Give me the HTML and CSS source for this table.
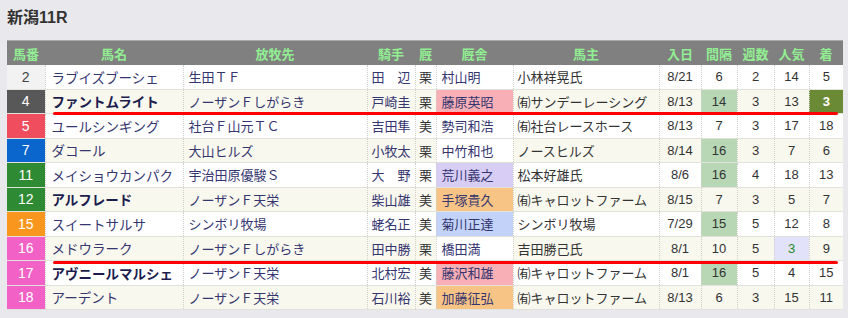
FILE: index.html
```html
<!DOCTYPE html>
<html lang="ja">
<head>
<meta charset="utf-8">
<link rel="stylesheet" href="styles.css">
</head>
<body>
<h1 class="title">新潟11R</h1>
<div class="board">
<table class="race">
<colgroup>
<col class="c-no"><col class="c-name"><col class="c-farm"><col class="c-jockey"><col class="c-area"><col class="c-stable"><col class="c-owner"><col class="c-date"><col class="c-int"><col class="c-week"><col class="c-pop"><col class="c-rank">
</colgroup>
<thead>
<tr><th>馬番</th><th>馬名</th><th>放牧先</th><th>騎手</th><th>厩</th><th>厩舎</th><th>馬主</th><th>入日</th><th>間隔</th><th>週数</th><th>人気</th><th>着</th></tr>
</thead>
<tbody>
<tr><td class="no f1">2</td><td class="name">ラブイズブーシェ</td><td class="farm">生田ＴＦ</td><td class="jockey">田　辺</td><td class="area">栗</td><td class="stable">村山明</td><td class="owner">小林祥晃氏</td><td class="num">8/21</td><td class="num">6</td><td class="num">2</td><td class="num">14</td><td class="num">5</td></tr>
<tr><td class="no f2">4</td><td class="name strong">ファントムライト</td><td class="farm">ノーザンＦしがらき</td><td class="jockey">戸崎圭</td><td class="area">栗</td><td class="stable s-pink">藤原英昭</td><td class="owner">㈲サンデーレーシング</td><td class="num">8/13</td><td class="num g">14</td><td class="num">3</td><td class="num">13</td><td class="num win">3</td></tr>
<tr><td class="no f3">5</td><td class="name">ユールシンギング</td><td class="farm">社台Ｆ山元ＴＣ</td><td class="jockey">吉田隼</td><td class="area">美</td><td class="stable">勢司和浩</td><td class="owner">㈲社台レースホース</td><td class="num">8/13</td><td class="num">7</td><td class="num">3</td><td class="num">17</td><td class="num">18</td></tr>
<tr><td class="no f4">7</td><td class="name">ダコール</td><td class="farm">大山ヒルズ</td><td class="jockey">小牧太</td><td class="area">栗</td><td class="stable s-white">中竹和也</td><td class="owner">ノースヒルズ</td><td class="num">8/14</td><td class="num g">16</td><td class="num">3</td><td class="num">7</td><td class="num">6</td></tr>
<tr><td class="no f6">11</td><td class="name">メイショウカンパク</td><td class="farm">宇治田原優駿Ｓ</td><td class="jockey">大　野</td><td class="area">栗</td><td class="stable s-lav">荒川義之</td><td class="owner">松本好雄氏</td><td class="num">8/6</td><td class="num g">16</td><td class="num">4</td><td class="num">18</td><td class="num">13</td></tr>
<tr><td class="no f6">12</td><td class="name strong">アルフレード</td><td class="farm">ノーザンＦ天栄</td><td class="jockey">柴山雄</td><td class="area">美</td><td class="stable s-orange">手塚貴久</td><td class="owner">㈲キャロットファーム</td><td class="num">8/15</td><td class="num">7</td><td class="num">3</td><td class="num">5</td><td class="num">7</td></tr>
<tr><td class="no f7">15</td><td class="name">スイートサルサ</td><td class="farm">シンボリ牧場</td><td class="jockey">蛯名正</td><td class="area">美</td><td class="stable s-blue">菊川正達</td><td class="owner">シンボリ牧場</td><td class="num">7/29</td><td class="num g">15</td><td class="num">5</td><td class="num">12</td><td class="num">8</td></tr>
<tr><td class="no f8">16</td><td class="name">メドウラーク</td><td class="farm">ノーザンＦしがらき</td><td class="jockey">田中勝</td><td class="area">栗</td><td class="stable s-white">橋田満</td><td class="owner">吉田勝己氏</td><td class="num">8/1</td><td class="num">10</td><td class="num">5</td><td class="num pop">3</td><td class="num">9</td></tr>
<tr><td class="no f8">17</td><td class="name strong">アヴニールマルシェ</td><td class="farm">ノーザンＦ天栄</td><td class="jockey">北村宏</td><td class="area">美</td><td class="stable s-pink">藤沢和雄</td><td class="owner">㈲キャロットファーム</td><td class="num">8/1</td><td class="num g">16</td><td class="num">5</td><td class="num">4</td><td class="num">15</td></tr>
<tr><td class="no f8">18</td><td class="name">アーデント</td><td class="farm">ノーザンＦ天栄</td><td class="jockey">石川裕</td><td class="area">美</td><td class="stable s-orange">加藤征弘</td><td class="owner">㈲キャロットファーム</td><td class="num">8/13</td><td class="num">6</td><td class="num">3</td><td class="num">15</td><td class="num">11</td></tr>
</tbody>
</table>
<div class="mark mark-a"></div>
<div class="mark mark-b"></div>
</div>
</body>
</html>
```
FILE: styles.css
```css
html, body {
  margin: 0;
  padding: 0;
  background: #e9e9ed;
}
body {
  padding: 7px 0 0 7px;
  font-family: "Liberation Sans", "Noto Sans CJK JP", sans-serif;
  color: #333;
}
.title {
  margin: 0;
  font-size: 16px;
  line-height: 22px;
  font-weight: bold;
  color: #333;
  height: 33px;
}
.board {
  position: relative;
  width: 836px;
}
.race {
  border-collapse: collapse;
  table-layout: fixed;
  width: 836px;
  background: #fff;
  font-size: 13px;
}
.c-no { width: 38px; }
.c-name { width: 138px; }
.c-farm { width: 184px; }
.c-jockey { width: 48px; }
.c-area { width: 21px; }
.c-stable { width: 77px; }
.c-owner { width: 146px; }
.c-date { width: 42px; }
.c-int { width: 36px; }
.c-week { width: 37px; }
.c-pop { width: 35px; }
.c-rank { width: 34px; }

.race th {
  background: #808080;
  color: #92ee92;
  font-weight: bold;
  font-size: 13px;
  height: 24px;
  padding: 0;
  text-align: center;
  border-top: 1px solid #a8a8a8;
  white-space: nowrap;
}
.race td {
  height: 23.5px;
  padding: 0;
  border-bottom: 1px solid #e2e2dc;
  border-left: 1px dotted #d0d0c8;
  white-space: nowrap;
  color: #333;
}
.race tbody tr:nth-child(even) td { background: #f8f8ee; }
.race td.no {
  text-align: center;
  color: #fff;
  font-size: 14px;
  border-left: none;
}
.race tbody tr td.f1 { background: #f2f2f2; color: #444; }
.race tbody tr td.f2 { background: #585858; }
.race tbody tr td.f3 { background: #f04e5e; }
.race tbody tr td.f4 { background: #0a66cc; }
.race tbody tr td.f6 { background: #2e8b34; }
.race tbody tr td.f7 { background: #f8961e; }
.race tbody tr td.f8 { background: #f262c6; }

.race td.name {
  padding-left: 6px;
  color: #35356f;
  font-size: 13.5px;
}
.race td.name.strong { font-weight: bold; color: #1c1c4e; }
.race td.farm { padding-left: 5px; color: #35356f; }
.race td.jockey { text-align: center; color: #35356f; }
.race td.area { text-align: center; }
.race td.stable { padding-left: 5px; color: #35356f; }
.race td.owner { padding-left: 4px; }
.race td.num { text-align: center; font-size: 13px; }

.race tbody tr td.s-pink { background: #f8b0b6; }
.race tbody tr td.s-lav { background: #d8cdf5; }
.race tbody tr td.s-orange { background: #f8c486; }
.race tbody tr td.s-blue { background: #c2d2f8; }
.race tbody tr td.s-white { background: #fff; }
.race tbody tr td.g { background: #b7d7b5; }
.race tbody tr td.win { background: #6b8a36; color: #fff; font-weight: bold; }
.race tbody tr td.pop { background: #e2e2fa; color: #2a8a2a; }

.mark {
  position: absolute;
  left: 46px;
  width: 785px;
  height: 3px;
  border-radius: 2px;
  background: #f00;
}
.mark-a { top: 72px; }
.mark-b { top: 221px; }
```
